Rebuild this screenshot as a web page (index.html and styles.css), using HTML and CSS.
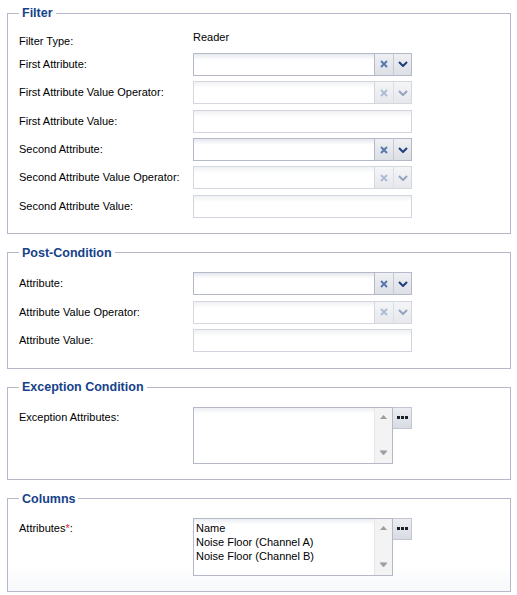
FILE: index.html
```html
<!DOCTYPE html>
<html>
<head>
<meta charset="utf-8">
<title>Filter</title>
<link rel="stylesheet" href="styles.css">
</head>
<body>
<div class="form">

  <fieldset class="fs">
    <legend>Filter</legend>
    <div class="rows">
      <div class="row row-display"><span class="lbl lbl-display">Filter Type:</span><span class="display">Reader</span></div>
      <div class="row"><span class="lbl">First Attribute:</span>
        <div class="combo"><div class="combo-input"></div>
          <span class="trig trig-clear"><svg width="8" height="8" viewBox="0 0 8 8"><path d="M1 1L7 7M7 1L1 7" stroke="#5478ae" stroke-width="1.9"/></svg></span>
          <span class="trig trig-arrow"><svg width="10" height="6" viewBox="0 0 10 6"><path d="M1 1L5 5L9 1" stroke="#1d3e7b" stroke-width="2" fill="none"/></svg></span>
        </div>
      </div>
      <div class="row"><span class="lbl">First Attribute Value Operator:</span>
        <div class="combo is-disabled"><div class="combo-input"></div>
          <span class="trig trig-clear"><svg width="8" height="8" viewBox="0 0 8 8"><path d="M1 1L7 7M7 1L1 7" stroke="#5478ae" stroke-width="1.9"/></svg></span>
          <span class="trig trig-arrow"><svg width="10" height="6" viewBox="0 0 10 6"><path d="M1 1L5 5L9 1" stroke="#1d3e7b" stroke-width="2" fill="none"/></svg></span>
        </div>
      </div>
      <div class="row"><span class="lbl">First Attribute Value:</span><div class="text"></div></div>
      <div class="row"><span class="lbl">Second Attribute:</span>
        <div class="combo"><div class="combo-input"></div>
          <span class="trig trig-clear"><svg width="8" height="8" viewBox="0 0 8 8"><path d="M1 1L7 7M7 1L1 7" stroke="#5478ae" stroke-width="1.9"/></svg></span>
          <span class="trig trig-arrow"><svg width="10" height="6" viewBox="0 0 10 6"><path d="M1 1L5 5L9 1" stroke="#1d3e7b" stroke-width="2" fill="none"/></svg></span>
        </div>
      </div>
      <div class="row"><span class="lbl">Second Attribute Value Operator:</span>
        <div class="combo is-disabled"><div class="combo-input"></div>
          <span class="trig trig-clear"><svg width="8" height="8" viewBox="0 0 8 8"><path d="M1 1L7 7M7 1L1 7" stroke="#5478ae" stroke-width="1.9"/></svg></span>
          <span class="trig trig-arrow"><svg width="10" height="6" viewBox="0 0 10 6"><path d="M1 1L5 5L9 1" stroke="#1d3e7b" stroke-width="2" fill="none"/></svg></span>
        </div>
      </div>
      <div class="row"><span class="lbl">Second Attribute Value:</span><div class="text"></div></div>
    </div>
  </fieldset>

  <fieldset class="fs">
    <legend>Post-Condition</legend>
    <div class="rows">
      <div class="row"><span class="lbl">Attribute:</span>
        <div class="combo"><div class="combo-input"></div>
          <span class="trig trig-clear"><svg width="8" height="8" viewBox="0 0 8 8"><path d="M1 1L7 7M7 1L1 7" stroke="#5478ae" stroke-width="1.9"/></svg></span>
          <span class="trig trig-arrow"><svg width="10" height="6" viewBox="0 0 10 6"><path d="M1 1L5 5L9 1" stroke="#1d3e7b" stroke-width="2" fill="none"/></svg></span>
        </div>
      </div>
      <div class="row"><span class="lbl">Attribute Value Operator:</span>
        <div class="combo is-disabled"><div class="combo-input"></div>
          <span class="trig trig-clear"><svg width="8" height="8" viewBox="0 0 8 8"><path d="M1 1L7 7M7 1L1 7" stroke="#5478ae" stroke-width="1.9"/></svg></span>
          <span class="trig trig-arrow"><svg width="10" height="6" viewBox="0 0 10 6"><path d="M1 1L5 5L9 1" stroke="#1d3e7b" stroke-width="2" fill="none"/></svg></span>
        </div>
      </div>
      <div class="row"><span class="lbl">Attribute Value:</span><div class="text"></div></div>
    </div>
  </fieldset>

  <fieldset class="fs">
    <legend>Exception Condition</legend>
    <div class="rows">
      <div class="row row-list"><span class="lbl lbl-list">Exception Attributes:</span>
        <div class="listfield">
          <div class="list">
            <div class="list-body"></div>
            <div class="vscroll">
              <svg width="7" height="5" viewBox="0 0 7 5"><path d="M0 4L3.5 0L7 4Z" fill="#9a9ca3"/></svg>
              <svg width="7" height="5" viewBox="0 0 7 5"><path d="M0 0H7M0 1L3.5 5L7 1Z" stroke="#a5a7ad" stroke-width="0.8" fill="#9a9ca3"/></svg>
            </div>
          </div>
          <span class="ellipsis"><svg width="11" height="3" viewBox="0 0 11 3"><rect x="0" y="0" width="3" height="3" fill="#1b1f2a"/><rect x="4" y="0" width="3" height="3" fill="#1b1f2a"/><rect x="8" y="0" width="3" height="3" fill="#1b1f2a"/></svg></span>
        </div>
      </div>
    </div>
  </fieldset>

  <fieldset class="fs fs-last">
    <legend>Columns</legend>
    <div class="rows">
      <div class="row row-list"><span class="lbl lbl-list">Attributes<span class="req">*</span>:</span>
        <div class="listfield">
          <div class="list">
            <div class="list-body">
              <div class="item">Name</div>
              <div class="item">Noise Floor (Channel A)</div>
              <div class="item">Noise Floor (Channel B)</div>
            </div>
            <div class="vscroll">
              <svg width="7" height="5" viewBox="0 0 7 5"><path d="M0 4L3.5 0L7 4Z" fill="#9a9ca3"/></svg>
              <svg width="7" height="5" viewBox="0 0 7 5"><path d="M0 0H7M0 1L3.5 5L7 1Z" stroke="#a5a7ad" stroke-width="0.8" fill="#9a9ca3"/></svg>
            </div>
          </div>
          <span class="ellipsis"><svg width="11" height="3" viewBox="0 0 11 3"><rect x="0" y="0" width="3" height="3" fill="#1b1f2a"/><rect x="4" y="0" width="3" height="3" fill="#1b1f2a"/><rect x="8" y="0" width="3" height="3" fill="#1b1f2a"/></svg></span>
        </div>
      </div>
    </div>
  </fieldset>

</div>
</body>
</html>
```

FILE: styles.css
```css
* { box-sizing: border-box; }

body {
  margin: 0;
  background: #fff;
  color: #000;
  font: 11px/14px "Liberation Sans", Arial, sans-serif;
}

.form {
  padding: 6px 6px 0 7px;
}

.fs {
  margin: 0 0 11.5px;
  padding: 12.5px 10px 15.5px 11px;
  border: 1px solid #b5b8c8;
  min-width: 0;
}

.fs-last {
  margin-bottom: 0;
  padding-top: 12px;
  padding-bottom: 15px;
  background: linear-gradient(#fff 70%, #f7f8fa);
}

.fs legend {
  padding: 0 3px;
  font-size: 12.5px;
  line-height: 14px;
  font-weight: bold;
  color: #15428b;
}

.rows {
  display: flex;
  flex-direction: column;
  gap: 5.4px;
}

.row {
  display: flex;
  height: 23px;
}

.row-display { height: 15px; }
.row-list { height: auto; }

.lbl {
  flex: none;
  width: 174px;
  padding-top: 4px;
  white-space: nowrap;
}

.lbl-display { padding-top: 1px; }
.lbl-list { padding-top: 3px; }

.display {
  margin-top: -3px;
}

.req { color: #e0232e; }

/* combo box */
.combo {
  display: flex;
  width: 219px;
  height: 23px;
}

.combo-input {
  flex: none;
  width: 181px;
  border: 1px solid #b5b8c8;
  border-right: 0;
  background: linear-gradient(#e6e8ee, #fff 6px);
}

.trig {
  flex: none;
  width: 19px;
  display: flex;
  align-items: center;
  justify-content: center;
  border-top: 1px solid #b5b8c8;
  border-bottom: 1px solid #b5b8c8;
  background: linear-gradient(#eef0f3, #dcdfe5);
}

.trig-clear {
  border-left: 1px solid #b5b8c8;
}

.trig-arrow {
  border-left: 1px solid #c5c9d6;
  border-right: 1px solid #b5b8c8;
}

.is-disabled .combo-input {
  border-color: #d5d7df;
  background: linear-gradient(#f0f1f4, #fff 6px);
}

.is-disabled .trig {
  border-color: #d5d7df;
  background: linear-gradient(#f4f5f7, #e6e8ec);
}

.is-disabled .trig-arrow { border-left-color: #dcdee5; }

.is-disabled .trig svg { opacity: 0.42; }

/* text field */
.text {
  width: 219px;
  height: 23px;
  border: 1px solid #d3d5de;
  background: linear-gradient(#eef0f3, #fff 6px);
}

/* list field */
.listfield {
  display: flex;
  align-items: flex-start;
}

.list {
  display: flex;
  width: 200px;
  height: 57px;
  border: 1px solid #b5b8c8;
  background: linear-gradient(#eceef2, #fff 6px);
}

.fs-last .list { height: 58px; }

.list-body {
  flex: 1;
  padding: 2px 2px;
}

.vscroll {
  flex: none;
  width: 18px;
  display: flex;
  flex-direction: column;
  justify-content: space-between;
  align-items: center;
  padding: 7px 0 8px;
  background: #f3f3f4;
  border-left: 1px solid #e6e6e9;
}

.ellipsis {
  flex: none;
  width: 19px;
  height: 22px;
  display: flex;
  align-items: center;
  justify-content: center;
  border: 1px solid #c3c6d2;
  border-left: 0;
  background: linear-gradient(#eceef2, #d8dbe2);
}
```
